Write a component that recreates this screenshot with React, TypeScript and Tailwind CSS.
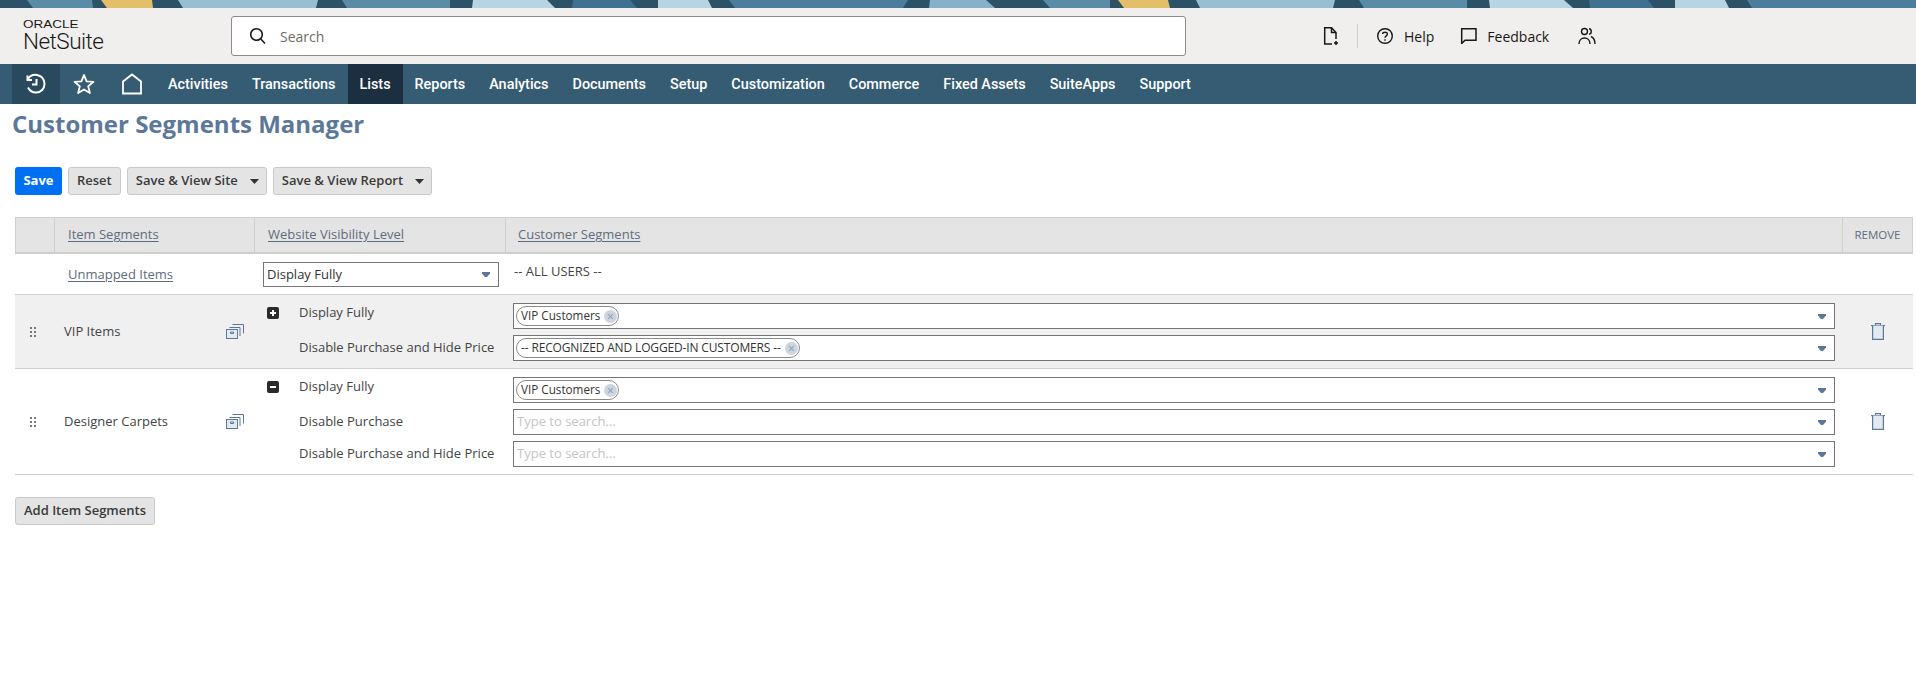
import React from "react";

const Caret = ({ className = "" }: { className?: string }) => (
  <svg width="8" height="5" viewBox="0 0 8 5" className={className}><path d="M0 0H8V1.5L5 5H3L0 1.5Z" fill="currentColor" /></svg>
);

const nav = ["Activities","Transactions","Lists","Reports","Analytics","Documents","Setup","Customization","Commerce","Fixed Assets","SuiteApps","Support"];

function Banner() {
  const shapes: [string, string][] = [
    ["27,0 92,0 93,8 33,8", "#5a8ca8"],
    ["101,0 152,0 153,8 107,8", "#e4bf6a"],
    ["178,0 318,0 316,8 183,8", "#96c0d2"],
    ["342,0 450,0 450,8 347,8", "#5a8ca8"],
    ["473,0 547,0 555,8 472,8", "#b5d5e2"],
    ["573,0 630,0 637,8 572,8", "#3f7190"],
    ["658,0 708,0 712,8 658,8", "#b5d5e2"],
    ["729,0 908,0 903,8 735,8", "#4a7e9c"],
    ["930,0 986,0 995,8 929,8", "#85b2c8"],
    ["1043,0 1110,0 1110,8 1050,8", "#5a8ca8"],
    ["1118,0 1168,0 1170,8 1124,8", "#e4bf6a"],
    ["1196,0 1335,0 1333,8 1200,8", "#96c0d2"],
    ["1359,0 1467,0 1467,8 1364,8", "#5a8ca8"],
    ["1489,0 1564,0 1573,8 1490,8", "#b5d5e2"],
    ["1589,0 1648,0 1654,8 1590,8", "#3f7190"],
    ["1675,0 1725,0 1729,8 1675,8", "#b5d5e2"],
    ["1747,0 1916,0 1916,8 1752,8", "#4a7e9c"],
  ];
  return (
    <div className="h-2 bg-[#2b5266] overflow-hidden">
      <svg width="1916" height="8" className="block">
        {shapes.map(([p, c]) => (
          <polygon key={p} points={p} fill={c} />
        ))}
      </svg>
    </div>
  );
}

function Header() {
  return (
    <div className="h-14 bg-[#f0efed] flex items-center font-['Open_Sans',sans-serif]">
      <div className="w-[231px] pl-[23px] text-[#1a1816] shrink-0">
        <div className="text-[10px] leading-[10px] font-['Liberation_Sans',sans-serif] origin-left scale-x-[1.35] mt-[-1px]">ORACLE</div>
        <div className="text-[22.5px] leading-[22px] tracking-[-0.5px] font-['Roboto',sans-serif] font-light">NetSuite</div>
      </div>
      <div className="w-[955px] h-10 bg-white border border-[#8c8c8c] rounded-[3px] flex items-center pl-[17px] shrink-0">
        <svg width="18" height="18" viewBox="0 0 18 18" fill="none" stroke="#1a1816" strokeWidth="1.6"><circle cx="7.5" cy="7.5" r="5.8" /><path d="M11.8 12L16 16.5" /></svg>
        <span className="ml-[13px] text-[14px] text-[#6f6b66]">Search</span>
      </div>
      <div className="flex items-center ml-[136px] text-[14px] text-[#1a1816]">
        <svg width="18" height="20" viewBox="0 0 16 20" fill="none" stroke="#1a1816" strokeWidth="1.5"><path d="M9 18H1.7V1.7H8.5L13 6.5V13" /><path d="M8.5 1.7V6.5H13" /><path d="M13 15V19M11 17H15" /></svg>
        <div className="w-px h-6 bg-[#cfcdc9] ml-[17px]" />
        <svg className="ml-[18px]" width="18" height="18" viewBox="0 0 18 18" fill="none" stroke="#1a1816" strokeWidth="1.4"><circle cx="9" cy="9" r="7.3" /><path d="M6.6 7.1C6.6 4.6 11.4 4.6 11.4 7.1C11.4 8.9 9 8.9 9 10.8" /><path d="M9 12.3V13.7" /></svg>
        <span className="ml-[10px]">Help</span>
        <svg className="ml-[26px]" width="18" height="18" viewBox="0 0 18 18" fill="none" stroke="#1a1816" strokeWidth="1.5"><path d="M1.7 17V1.7H16V13.2H5L1.7 16.5Z" /></svg>
        <span className="ml-[9px]">Feedback</span>
        <svg className="ml-[29px]" width="18" height="18" viewBox="0 0 18 18" fill="none" stroke="#1a1816" strokeWidth="1.4"><circle cx="6.5" cy="4.5" r="3" /><path d="M1 17C1 9 12 9 12 17" /><path d="M11 1.8C14 2 14 7 11 7.2" /><path d="M13 9.5C15.5 10.5 17 13 17 17" /></svg>
      </div>
    </div>
  );
}

function Nav() {
  return (
    <div className="h-10 bg-[#355c72] flex items-stretch pl-3 text-white font-['Roboto',sans-serif] font-medium text-[14.4px]">
      <div className="w-12 bg-[#294a5e] flex items-center justify-center">
        <svg width="22" height="22" viewBox="0 0 22 22" fill="none" stroke="#fff" strokeWidth="2"><path d="M3 6C5 2.5 9 1.5 12 2C16.5 3 19.5 6.5 19.5 11C19.5 15.5 16 19.5 11 19.5C7.5 19.5 4.5 17.5 3 14.5" /><path d="M2.5 2.5V7H7" /><path d="M11.5 6V11.5H7" /></svg>
      </div>
      <div className="w-12 flex items-center justify-center">
        <svg width="22" height="22" viewBox="0 0 22 22" fill="none" stroke="#fff" strokeWidth="1.8" strokeLinejoin="round"><path d="M11 2L13.6 8.4L20.5 8.9L15.2 13.3L16.9 20L11 16.4L5.1 20L6.8 13.3L1.5 8.9L8.4 8.4Z" /></svg>
      </div>
      <div className="w-12 flex items-center justify-center">
        <svg width="22" height="22" viewBox="0 0 22 22" fill="none" stroke="#fff" strokeWidth="1.8"><path d="M2 20.5V8.5L11 1.5L20 8.5V20.5Z" /></svg>
      </div>
      <div className="flex items-stretch">
        {nav.map((n) => (
          <div key={n} className={`flex items-center px-[12px] pt-[2px] ${n === "Lists" ? "bg-[#1b2f41]" : ""}`}>{n}</div>
        ))}
      </div>
    </div>
  );
}

function Btn({ children, caret }: { children: React.ReactNode; caret?: boolean }) {
  return (
    <button className="h-7 px-[8px] rounded-[3px] bg-[#e4e4e4] border border-[#c9c9c9] text-[13px] font-semibold text-[#3a3a3a] flex items-center">
      {children}
      {caret && <svg className="ml-[12px] mr-[-1px]" width="9" height="5" viewBox="0 0 9 5"><path d="M0 0H9L4.5 5Z" fill="#333" /></svg>}
    </button>
  );
}

function Field({ tag, wide }: { tag?: string; wide?: boolean }) {
  return (
    <div className="h-[26px] flex-1 bg-white border border-[#757575] flex items-center pl-[2px] pr-[8px]">
      {tag ? (
        <span className={`h-5 rounded-full border border-[#8a8a8a] flex items-center pl-[4px] pr-[1px] text-[#333] ${wide ? "text-[12px] tracking-[-0.15px]" : "text-[11.7px]"}`}>
          {tag}
          <svg className="ml-[4px]" width="13" height="13" viewBox="0 0 13 13"><circle cx="6.5" cy="6.5" r="6.5" fill="#ccd4df" /><path d="M4.2 4.2L8.8 8.8M8.8 4.2L4.2 8.8" stroke="#98a4b5" strokeWidth="1.2" /></svg>
        </span>
      ) : (
        <span className="pl-[1px] text-[13px] text-[#c4c4c4]">Type to search...</span>
      )}
      <Caret className="ml-auto text-[#5c7899]" />
    </div>
  );
}

const CopyIcon = () => (
  <svg width="18" height="15" viewBox="0 0 18 15" fill="none" stroke="#5c7899"><rect x="0.5" y="5.5" width="11" height="9" fill="#e4e9f0" /><path d="M3.5 3.5H14V12" /><path d="M6.5 0.5H17.5V9.5" /><path d="M4.5 8H7.5V9.5H4.5Z" /></svg>
);

const Trash = () => (
  <svg width="14" height="17" viewBox="0 0 14 17" fill="none" stroke="#5c7899" strokeWidth="1.2"><path d="M0 2.6H14" /><path d="M4.5 2.5V0.6H9.5V2.5" /><path d="M1.6 2.6V16.4H12.4V2.6" fill="#e4e9f0" /></svg>
);

const Grip = () => (
  <svg width="7" height="10" viewBox="0 0 7 10" fill="#777"><rect x="0" y="0" width="2" height="2"/><rect x="4" y="0" width="2" height="2"/><rect x="0" y="4" width="2" height="2"/><rect x="4" y="4" width="2" height="2"/><rect x="0" y="8" width="2" height="2"/><rect x="4" y="8" width="2" height="2"/></svg>
);

function Seg({ name, sign, rows, bg }: { name: string; sign: "+" | "-"; rows: { label: string; tag?: string; wide?: boolean }[]; bg: string }) {
  return (
    <div className={`flex items-stretch border-b border-[#cfcfcf] text-[13px] text-[#444] ${bg}`}>
      <div className="w-[39px] flex items-center justify-center pr-[3px]"><Grip /></div>
      <div className="w-[171px] pl-[10px] flex items-center">{name}</div>
      <div className="w-[33px] pl-[1px] flex items-center"><CopyIcon /></div>
      <div className="flex-1 relative pt-[8px] pb-[7px] flex flex-col gap-[6px]">
        <div className="absolute left-[9px] top-[12px] w-3 h-3 rounded-[2px] bg-[#2a2a2a] flex items-center justify-center">
          <svg width="8" height="8" viewBox="0 0 8 8"><path d={sign === "+" ? "M3 1H5V3H7V5H5V7H3V5H1V3H3Z" : "M1 3H7V5H1Z"} fill="#fff" /></svg>
        </div>
        {rows.map((r, i) => (
          <div key={r.label} className="flex items-center">
            <div className={`w-[255px] pl-[41px] ${i === 0 ? "mb-[6px]" : ""}`}>{r.label}</div>
            <Field tag={r.tag} wide={r.wide} />
            <div className="w-[78px]" />
          </div>
        ))}
        <div className="absolute right-[28px] top-0 bottom-0 flex items-center"><Trash /></div>
      </div>
    </div>
  );
}

export default function App() {
  return (
    <div className="min-h-[677px] bg-white font-['Open_Sans',sans-serif]">
      <Banner />
      <Header />
      <Nav />
      <div className="pl-[12px] pt-[6px] text-[24px] leading-[28px] font-bold text-[#5c7899]">Customer Segments Manager</div>
      <div className="pl-[15px] pr-[3px]">
        <div className="flex gap-[6px] mt-[29px]">
          <button className="h-7 w-[47px] rounded-[3px] bg-[#0070f2] text-white text-[13px] font-bold">Save</button>
          <Btn>Reset</Btn>
          <Btn caret>Save &amp; View Site</Btn>
          <Btn caret>Save &amp; View Report</Btn>
        </div>
        <div className="mt-[22px]">
          <div className="h-[37px] flex items-stretch bg-[#e4e4e4] border border-[#cfcfcf] border-b-2 text-[13px] text-[#5e6c80]">
            <div className="w-[39px] border-r border-[#cfcfcf]" />
            <div className="w-[200px] pl-[13px] flex items-center border-r border-[#cfcfcf]"><span className="underline underline-offset-2">Item Segments</span></div>
            <div className="w-[251px] pl-[13px] flex items-center border-r border-[#cfcfcf]"><span className="underline underline-offset-2">Website Visibility Level</span></div>
            <div className="flex-1 pl-[12px] flex items-center"><span className="underline underline-offset-2">Customer Segments</span></div>
            <div className="w-[70px] border-l border-[#cfcfcf] flex items-center justify-center text-[11.5px]">REMOVE</div>
          </div>
          <div className="h-[41px] pt-px flex items-center border-b border-[#cfcfcf] text-[13px] text-[#444]">
            <div className="w-[239px] pl-[53px]"><span className="underline underline-offset-2 text-[#5e6c80]">Unmapped Items</span></div>
            <div className="ml-[9px] w-[236px] h-[25px] border border-[#757575] flex items-center pl-[3px] pr-[8px] text-[#333]">Display Fully<Caret className="ml-auto text-[#5c7899]" /></div>
            <div className="ml-[15px] -mt-[6px]">-- ALL USERS --</div>
          </div>
          <Seg name="VIP Items" sign="+" bg="bg-[#f0f0f0]" rows={[{ label: "Display Fully", tag: "VIP Customers" }, { label: "Disable Purchase and Hide Price", tag: "-- RECOGNIZED AND LOGGED-IN CUSTOMERS --", wide: true }]} />
          <Seg name="Designer Carpets" sign="-" bg="bg-white" rows={[{ label: "Display Fully", tag: "VIP Customers" }, { label: "Disable Purchase" }, { label: "Disable Purchase and Hide Price" }]} />
          <button className="mt-[22px] h-7 w-[140px] rounded-[3px] bg-[#e4e4e4] border border-[#c9c9c9] text-[13px] font-semibold text-[#3a3a3a]">Add Item Segments</button>
        </div>
      </div>
    </div>
  );
}
